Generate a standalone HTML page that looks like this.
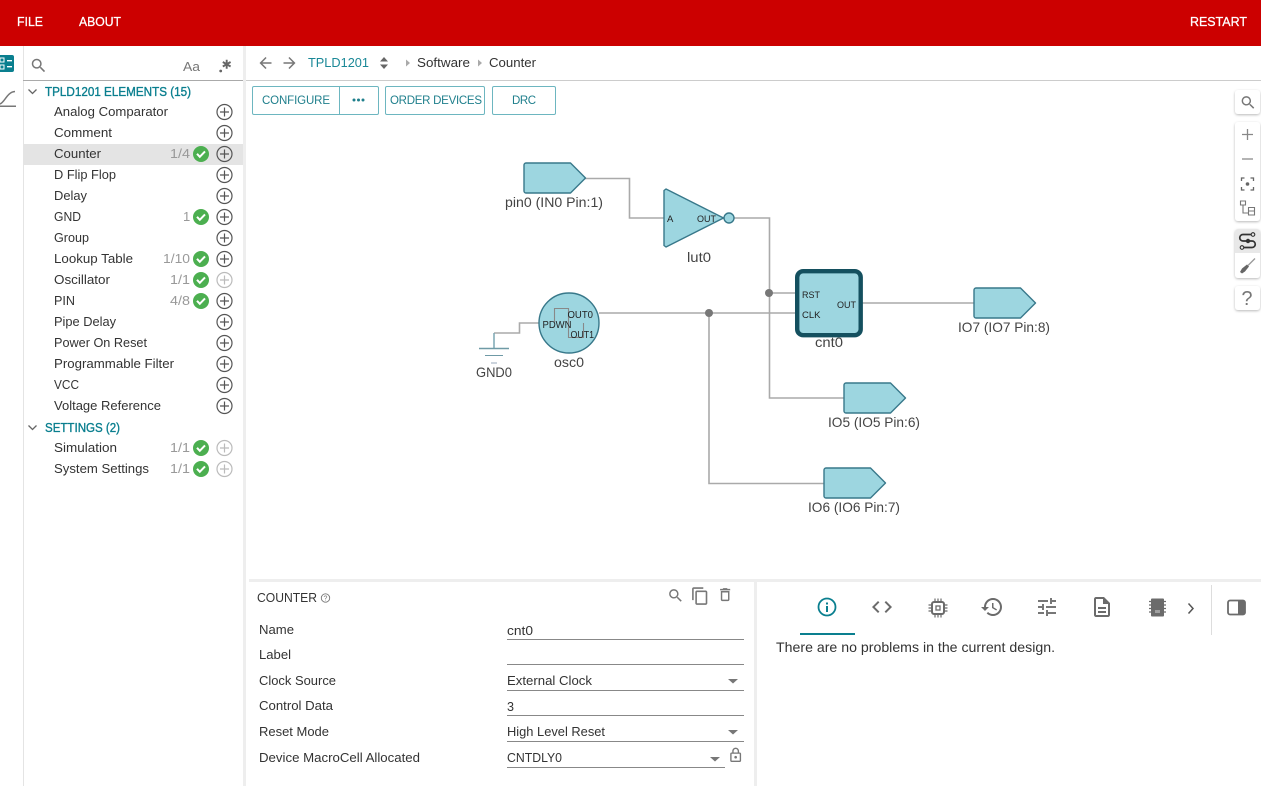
<!DOCTYPE html>
<html lang="en">
<head>
<meta charset="utf-8">
<title>TPLD1201</title>
<style>
html,body{margin:0;padding:0;width:1261px;height:786px;overflow:hidden;background:#fff}
svg{display:block}
text{font-family:"Liberation Sans",sans-serif;font-size:13px;fill:#333;white-space:pre}
.h{fill:#fff;font-size:12.5px;stroke:#fff;stroke-width:.25}
.t{fill:#0a7f8f;font-size:12.5px;stroke:#0a7f8f;stroke-width:.35}
.c{fill:#999;font-size:13px}
.b{fill:#1f7f8c;font-size:11.5px}
.l{font-size:14px;fill:#444}
.s{font-size:9.5px;fill:#222}
.w{fill:none;stroke:#aaa;stroke-width:1.6}
.p{fill:#9dd6e0;stroke:#38788a;stroke-width:1.4;stroke-linejoin:round}
.a{fill:none;stroke:#555;stroke-width:1.2}
.d{fill:none;stroke:#bbb;stroke-width:1.2}
.u{stroke:#888;stroke-width:1}
</style>
</head>
<body>
<svg width="1261" height="786" viewBox="0 0 1261 786" xmlns="http://www.w3.org/2000/svg">
<defs>
<filter id="sh" x="-30%" y="-30%" width="160%" height="160%"><feDropShadow dx="0" dy="1" stdDeviation="1.3" flood-color="#000" flood-opacity=".28"/></filter>
<g id="pl"><circle r="7.5" class="a"/><path d="M-4.5 0H4.5M0-4.5V4.5" class="a"/></g>
<g id="pd"><circle r="7.5" class="d"/><path d="M-4.5 0H4.5M0-4.5V4.5" class="d"/></g>
<g id="ck"><circle r="8" fill="#4caf50"/><path d="M-4-.2-1.2 2.8 4-2.6" fill="none" stroke="#fff" stroke-width="2"/></g>
</defs>

<!-- header -->
<rect width="1261" height="46" fill="#cc0000"/>
<text class="h" x="17" y="26" textLength="26" lengthAdjust="spacingAndGlyphs">FILE</text>
<text class="h" x="79" y="26" textLength="42" lengthAdjust="spacingAndGlyphs">ABOUT</text>
<text class="h" x="1190" y="26" textLength="57" lengthAdjust="spacingAndGlyphs">RESTART</text>

<!-- left strip -->
<rect x="23" y="46" width="1" height="740" fill="#e4e4e4"/>
<rect x="-4" y="55" width="18" height="17" rx="2" fill="#0a7f8f"/>
<path d="M0 58h4v4H0zM0 65h4v4H0z" fill="none" stroke="#fff" stroke-width="1"/>
<path d="M7 60h5v1.4H7zM7 66h5v1.4H7z" fill="#fff"/>
<path d="M0 104C5 102 7 92 15 91.500" fill="none" stroke="#777" stroke-width="1.500"/>
<rect x="0" y="105.500" width="16" height="1.500" fill="#777"/>

<!-- sidebar -->
<rect x="243" y="46" width="3" height="740" fill="#eee"/>
<rect x="23" y="80" width="220" height="1" fill="#aaa"/>
<g transform="translate(29.500 56.500) scale(.76)" fill="#777"><path d="M15.500 14h-.79l-.28-.27C15.410 12.590 16 11.110 16 9.500 16 5.910 13.090 3 9.500 3S3 5.910 3 9.500 5.910 16 9.500 16c1.610 0 3.090-.59 4.230-1.570l.27.28v.79l5 4.990L20.490 19l-4.990-5zm-6 0C7.010 14 5 11.990 5 9.500S7.010 5 9.500 5 14 7.010 14 9.500 11.990 14 9.500 14z"/></g>
<text x="183" y="71" style="font-size:13px;fill:#777" textLength="17" lengthAdjust="spacingAndGlyphs">Aa</text>
<circle cx="220.700" cy="71" r="1.400" fill="#666"/>
<path d="M226.700 59.800v9M222.800 62l7.800 4.500M230.600 62l-7.800 4.500" stroke="#666" stroke-width="1.900"/>

<path d="M28.500 89.500 32.500 93.500 36.500 89.500M28.500 425.500 32.500 429.500 36.500 425.500" fill="none" stroke="#666" stroke-width="1.300"/>
<text class="t" x="45" y="96" textLength="146" lengthAdjust="spacingAndGlyphs">TPLD1201 ELEMENTS (15)</text>
<text class="t" x="45" y="432" textLength="75" lengthAdjust="spacingAndGlyphs">SETTINGS (2)</text>

<rect x="23" y="144" width="220" height="21" fill="#e4e4e4"/>

<g>
<text x="54" y="116" textLength="114" lengthAdjust="spacingAndGlyphs">Analog Comparator</text>
<text x="54" y="137" textLength="58" lengthAdjust="spacingAndGlyphs">Comment</text>
<text x="54" y="158" textLength="47" lengthAdjust="spacingAndGlyphs">Counter</text>
<text x="54" y="179" textLength="62" lengthAdjust="spacingAndGlyphs">D Flip Flop</text>
<text x="54" y="200" textLength="33" lengthAdjust="spacingAndGlyphs">Delay</text>
<text x="54" y="221" textLength="27" lengthAdjust="spacingAndGlyphs">GND</text>
<text x="54" y="242" textLength="35" lengthAdjust="spacingAndGlyphs">Group</text>
<text x="54" y="263" textLength="79" lengthAdjust="spacingAndGlyphs">Lookup Table</text>
<text x="54" y="284" textLength="56" lengthAdjust="spacingAndGlyphs">Oscillator</text>
<text x="54" y="305" textLength="21" lengthAdjust="spacingAndGlyphs">PIN</text>
<text x="54" y="326" textLength="62" lengthAdjust="spacingAndGlyphs">Pipe Delay</text>
<text x="54" y="347" textLength="93" lengthAdjust="spacingAndGlyphs">Power On Reset</text>
<text x="54" y="368" textLength="120" lengthAdjust="spacingAndGlyphs">Programmable Filter</text>
<text x="54" y="389" textLength="25" lengthAdjust="spacingAndGlyphs">VCC</text>
<text x="54" y="410" textLength="107" lengthAdjust="spacingAndGlyphs">Voltage Reference</text>
<text x="54" y="452" textLength="63" lengthAdjust="spacingAndGlyphs">Simulation</text>
<text x="54" y="473" textLength="95" lengthAdjust="spacingAndGlyphs">System Settings</text>

<text class="c" x="170" y="158" textLength="20" lengthAdjust="spacingAndGlyphs">1/4</text>
<text class="c" x="183" y="221">1</text>
<text class="c" x="163" y="263" textLength="27" lengthAdjust="spacingAndGlyphs">1/10</text>
<text class="c" x="170" y="284" textLength="20" lengthAdjust="spacingAndGlyphs">1/1</text>
<text class="c" x="170" y="305" textLength="20" lengthAdjust="spacingAndGlyphs">4/8</text>
<text class="c" x="170" y="452" textLength="20" lengthAdjust="spacingAndGlyphs">1/1</text>
<text class="c" x="170" y="473" textLength="20" lengthAdjust="spacingAndGlyphs">1/1</text>
</g>

<use href="#ck" x="201" y="154"/>
<use href="#ck" x="201" y="217"/>
<use href="#ck" x="201" y="259"/>
<use href="#ck" x="201" y="280"/>
<use href="#ck" x="201" y="301"/>
<use href="#ck" x="201" y="448"/>
<use href="#ck" x="201" y="469"/>

<use href="#pl" x="224.500" y="112"/>
<use href="#pl" x="224.500" y="133"/>
<use href="#pl" x="224.500" y="154"/>
<use href="#pl" x="224.500" y="175"/>
<use href="#pl" x="224.500" y="196"/>
<use href="#pl" x="224.500" y="217"/>
<use href="#pl" x="224.500" y="238"/>
<use href="#pl" x="224.500" y="259"/>
<use href="#pd" x="224.500" y="280"/>
<use href="#pl" x="224.500" y="301"/>
<use href="#pl" x="224.500" y="322"/>
<use href="#pl" x="224.500" y="343"/>
<use href="#pl" x="224.500" y="364"/>
<use href="#pl" x="224.500" y="385"/>
<use href="#pl" x="224.500" y="406"/>
<use href="#pd" x="224.500" y="448"/>
<use href="#pd" x="224.500" y="469"/>

<!-- breadcrumb -->
<rect x="246" y="80" width="1015" height="1" fill="#ccc"/>
<g transform="translate(256.500 54) scale(.75)" fill="#777"><path d="M20 11H7.830l5.590-5.590L12 4l-8 8 8 8 1.410-1.410L7.830 13H20v-2z"/></g>
<g transform="translate(280.500 54) scale(.75)" fill="#777"><path d="M12 4l-1.410 1.410L16.170 11H4v2h12.170l-5.580 5.590L12 20l8-8z"/></g>
<text x="308" y="67" style="fill:#1a8897" textLength="61" lengthAdjust="spacingAndGlyphs">TPLD1201</text>
<path d="M380 61.500 384 57 388 61.500zM380 64.500 384 69 388 64.500z" fill="#666"/>
<path d="M406 59.500 410 63 406 66.500zM478 59.500 482 63 478 66.500z" fill="#aaa"/>
<text x="417" y="67" textLength="53" lengthAdjust="spacingAndGlyphs">Software</text>
<text x="489" y="67" textLength="47" lengthAdjust="spacingAndGlyphs">Counter</text>

<!-- buttons -->
<g fill="#fff" stroke="#6db6c0" stroke-width="1">
<rect x="252.500" y="86.500" width="126" height="28" rx="1.500"/>
<path d="M339.500 87v27"/>
<rect x="385.500" y="86.500" width="99" height="28" rx="1.500"/>
<rect x="492.500" y="86.500" width="63" height="28" rx="1.500"/>
</g>
<text class="b" x="262" y="104" textLength="68">CONFIGURE</text>
<circle cx="354" cy="100" r="1.500" fill="#1f7f8c"/><circle cx="358.500" cy="100" r="1.500" fill="#1f7f8c"/><circle cx="363" cy="100" r="1.500" fill="#1f7f8c"/>
<text class="b" x="390" y="104" textLength="92">ORDER DEVICES</text>
<text class="b" x="512" y="104" textLength="24">DRC</text>

<!-- right toolbar -->
<g fill="#fff" filter="url(#sh)">
<rect x="1235" y="90" width="25" height="24" rx="3"/>
<rect x="1235" y="122" width="25" height="99" rx="3"/>
<rect x="1235" y="229" width="25" height="49" rx="3"/>
<rect x="1235" y="286" width="25" height="24" rx="3"/>
</g>
<path d="M1235 232a3 3 0 0 1 3-3h19a3 3 0 0 1 3 3v21h-25z" fill="#e8e8e8"/>
<g transform="translate(1239.500 94) scale(.72)" fill="#777"><path d="M15.500 14h-.79l-.28-.27C15.410 12.590 16 11.110 16 9.500 16 5.910 13.090 3 9.500 3S3 5.910 3 9.500 5.910 16 9.500 16c1.610 0 3.090-.59 4.230-1.570l.27.28v.79l5 4.990L20.490 19l-4.990-5zm-6 0C7.010 14 5 11.990 5 9.500S7.010 5 9.500 5 14 7.010 14 9.500 11.990 14 9.500 14z"/></g>
<path d="M1242 134.500h11M1247.500 129v11M1242 159h11" stroke="#888" stroke-width="1.300" fill="none"/>
<path d="M1241.500 181v-3h3M1250.500 178h3v3M1253.500 187v3h-3M1244.500 190h-3v-3" stroke="#666" stroke-width="1.300" fill="none"/>
<circle cx="1247.500" cy="184" r="1.800" fill="#666"/>
<path d="M1240.500 201h5v4h-5zM1248.500 207.500h6v3.500h-6zM1248.500 211h6v4h-6zM1243 205v8h5.500" fill="none" stroke="#777" stroke-width="1.100"/>
<path d="M1252 234.500h-9a3.200 3.200 0 0 0 0 6.500h9a3.200 3.200 0 0 1 0 6.500h-9" fill="none" stroke="#333" stroke-width="1.700"/>
<circle cx="1253" cy="234.500" r="1.800" fill="#e8e8e8" stroke="#333" stroke-width="1.100"/>
<circle cx="1242" cy="247.500" r="1.800" fill="#e8e8e8" stroke="#333" stroke-width="1.100"/>
<circle cx="1248" cy="241" r="2.200" fill="#333"/>
<path d="M1240 272l2-3.500 5-4 2 2-4 5-3 2z" fill="#666"/>
<path d="M1248 265.500 1255 258.500" stroke="#999" stroke-width="1.300"/>
<text x="1241.500" y="305" style="font-size:20px;fill:#777" textLength="11" lengthAdjust="spacingAndGlyphs">?</text>

<!-- diagram wires -->
<g class="w">
<path d="M585 178.500H629.500V218H664"/>
<path d="M734 218H769.500V398H844"/>
<path d="M769 293H797"/>
<path d="M599 313H797"/>
<path d="M709 313V483.500H824"/>
<path d="M862 303H974"/>
<path d="M539 323H519.500V333H494"/>
</g>
<circle cx="769" cy="293" r="4" fill="#777"/>
<circle cx="709" cy="313" r="4" fill="#777"/>

<!-- pins -->
<path class="p" d="M524 165a2 2 0 0 1 2-2H570.500L585.500 178 570.500 193H526a2 2 0 0 1-2-2z"/>
<path class="p" d="M974 290a2 2 0 0 1 2-2H1020.500L1035.500 303 1020.500 318H976a2 2 0 0 1-2-2z"/>
<path class="p" d="M844 385a2 2 0 0 1 2-2H890.500L905.500 398 890.500 413H846a2 2 0 0 1-2-2z"/>
<path class="p" d="M824 470a2 2 0 0 1 2-2H870.500L885.500 483 870.500 498H826a2 2 0 0 1-2-2z"/>

<!-- lut -->
<path class="p" d="M664 190.500 666 189 723.500 218 666 247 664 245.500z"/>
<circle class="p" cx="729" cy="218" r="5"/>
<text class="s" x="667" y="222">A</text>
<text class="s" x="697" y="222" textLength="19" lengthAdjust="spacingAndGlyphs">OUT</text>

<!-- cnt -->
<rect x="797.200" y="271.200" width="63.500" height="64" rx="6" fill="#9dd6e0" stroke="#14505f" stroke-width="4.400"/>
<text class="s" x="802" y="298" textLength="18" lengthAdjust="spacingAndGlyphs">RST</text>
<text class="s" x="802" y="318" textLength="18.500" lengthAdjust="spacingAndGlyphs">CLK</text>
<text class="s" x="837" y="308" textLength="19" lengthAdjust="spacingAndGlyphs">OUT</text>

<!-- osc -->
<circle class="p" cx="569" cy="323" r="30"/>
<path d="M554.500 322V308.500H568.500V337.500H583.500V323" fill="none" stroke="#888" stroke-width="1.100"/>
<text class="s" x="542.500" y="328" style="font-size:10px" textLength="29" lengthAdjust="spacingAndGlyphs">PDWN</text>
<text class="s" x="567.500" y="318" style="font-size:10px" textLength="25.500" lengthAdjust="spacingAndGlyphs">OUT0</text>
<text class="s" x="570.500" y="338" style="font-size:10px" textLength="23.500" lengthAdjust="spacingAndGlyphs">OUT1</text>

<!-- gnd -->
<path d="M494 333V348" stroke="#7ba7b2" stroke-width="1.500"/>
<path d="M479 348.500H509" stroke="#6f9aa6" stroke-width="1.500"/>
<path d="M485 355.500H503" stroke="#6f9aa6" stroke-width="1"/>
<path d="M491 363H497" stroke="#9ab" stroke-width="1"/>

<text class="l" x="505" y="207" textLength="98" lengthAdjust="spacingAndGlyphs">pin0 (IN0 Pin:1)</text>
<text class="l" x="687" y="262" textLength="24" lengthAdjust="spacingAndGlyphs">lut0</text>
<text class="l" x="815" y="347" textLength="28" lengthAdjust="spacingAndGlyphs">cnt0</text>
<text class="l" x="958" y="332" textLength="92" lengthAdjust="spacingAndGlyphs">IO7 (IO7 Pin:8)</text>
<text class="l" x="828" y="427" textLength="92" lengthAdjust="spacingAndGlyphs">IO5 (IO5 Pin:6)</text>
<text class="l" x="808" y="512" textLength="92" lengthAdjust="spacingAndGlyphs">IO6 (IO6 Pin:7)</text>
<text class="l" x="554" y="367" textLength="30" lengthAdjust="spacingAndGlyphs">osc0</text>
<text class="l" x="476" y="377" textLength="36" lengthAdjust="spacingAndGlyphs">GND0</text>

<!-- bottom panels -->
<rect x="249" y="579" width="1012" height="3" fill="#eee"/>
<rect x="754" y="582" width="3" height="204" fill="#eee"/>

<text x="257" y="602" textLength="60" lengthAdjust="spacingAndGlyphs">COUNTER</text>
<circle cx="325.500" cy="598" r="4.200" fill="none" stroke="#777" stroke-width=".9"/>
<text x="323.500" y="600.500" style="font-size:7px;fill:#777">?</text>
<g transform="translate(667 587) scale(.72)" fill="#777"><path d="M15.500 14h-.79l-.28-.27C15.410 12.590 16 11.110 16 9.500 16 5.910 13.090 3 9.500 3S3 5.910 3 9.500 5.910 16 9.500 16c1.610 0 3.090-.59 4.230-1.570l.27.28v.79l5 4.990L20.490 19l-4.990-5zm-6 0C7.010 14 5 11.990 5 9.500S7.010 5 9.500 5 14 7.010 14 9.500 11.990 14 9.500 14z"/></g>
<g transform="translate(690.500 586.500) scale(.8)" fill="#777"><path d="M16 1H4c-1.100 0-2 .9-2 2v14h2V3h12V1zm3 4H8c-1.100 0-2 .9-2 2v14c0 1.100.9 2 2 2h11c1.100 0 2-.9 2-2V7c0-1.100-.9-2-2-2zm0 16H8V7h11v14z"/></g>
<g transform="translate(716.500 586) scale(.72)" fill="#777"><path d="M6 19c0 1.100.9 2 2 2h8c1.100 0 2-.9 2-2V7H6v12zM8 9h8v10H8V9zm7.500-5l-1-1h-5l-1 1H5v2h14V4z"/></g>

<text x="259" y="634" textLength="35" lengthAdjust="spacingAndGlyphs">Name</text>
<text x="259" y="659" textLength="32" lengthAdjust="spacingAndGlyphs">Label</text>
<text x="259" y="685" textLength="77" lengthAdjust="spacingAndGlyphs">Clock Source</text>
<text x="259" y="710" textLength="74" lengthAdjust="spacingAndGlyphs">Control Data</text>
<text x="259" y="736" textLength="70" lengthAdjust="spacingAndGlyphs">Reset Mode</text>
<text x="259" y="762" textLength="161" lengthAdjust="spacingAndGlyphs">Device MacroCell Allocated</text>

<text x="507" y="635" textLength="26" lengthAdjust="spacingAndGlyphs">cnt0</text>
<text x="507" y="685" textLength="85" lengthAdjust="spacingAndGlyphs">External Clock</text>
<text x="507" y="711" textLength="7" lengthAdjust="spacingAndGlyphs">3</text>
<text x="507" y="736" textLength="98" lengthAdjust="spacingAndGlyphs">High Level Reset</text>
<text x="507" y="762" textLength="55" lengthAdjust="spacingAndGlyphs">CNTDLY0</text>

<path class="u" d="M507 639.500H744M507 664.500H744M507 690.500H744M507 715.500H744M507 741.500H744M507 767.500H725"/>
<path d="M728 679H738L733 683.500zM728 730H738L733 734.500zM710 757H720L715 761.500z" fill="#777"/>
<g transform="translate(727.500 747) scale(.68)" fill="#777"><path d="M18 8h-1V6c0-2.760-2.240-5-5-5S7 3.240 7 6v2H6c-1.100 0-2 .9-2 2v10c0 1.100.9 2 2 2h12c1.100 0 2-.9 2-2V10c0-1.100-.9-2-2-2zM9 6c0-1.660 1.340-3 3-3s3 1.340 3 3v2H9V6zm9 14H6V10h12v10zm-6-3c1.100 0 2-.9 2-2s-.9-2-2-2-2 .9-2 2 .9 2 2 2z"/></g>

<!-- tabs -->
<rect x="800" y="633" width="55" height="2" fill="#0a7f8f"/>
<circle cx="827" cy="607" r="8.500" fill="none" stroke="#0a7f8f" stroke-width="1.800"/>
<path d="M826 606h2v6h-2zM826 602.500h2v2h-2z" fill="#0a7f8f"/>
<g transform="translate(870 595)" fill="#6b6b6b"><path d="M9.400 16.600L4.800 12l4.600-4.600L8 6l-6 6 6 6 1.400-1.400zm5.200 0l4.600-4.600-4.600-4.600L16 6l6 6-6 6-1.400-1.400z"/></g>
<rect x="932" y="602" width="12" height="12" rx="2" fill="none" stroke="#6b6b6b" stroke-width="2"/>
<rect x="936" y="606" width="4" height="4" fill="none" stroke="#6b6b6b" stroke-width="1.300"/>
<path d="M935 598.500v3M938 598.500v3M941 598.500v3M935 614.500v3M938 614.500v3M941 614.500v3M928.500 605h3M928.500 608h3M928.500 611h3M944.500 605h3M944.500 608h3M944.500 611h3" stroke="#6b6b6b" stroke-width="1.200" fill="none"/>
<g transform="translate(980 595)" fill="#6b6b6b"><path d="M13 3c-4.970 0-9 4.030-9 9H1l3.890 3.890.07.14L9 12H6c0-3.870 3.130-7 7-7s7 3.130 7 7-3.130 7-7 7c-1.930 0-3.680-.79-4.940-2.060l-1.420 1.420C8.270 19.990 10.510 21 13 21c4.970 0 9-4.030 9-9s-4.030-9-9-9zm-1 5v5l4.280 2.540.72-1.210-3.500-2.080V8H12z"/></g>
<g transform="translate(1035 595)" fill="#777"><path d="M3 17v2h6v-2H3zM3 5v2h10V5H3zm10 16v-2h8v-2h-8v-2h-2v6h2zM7 9v2H3v2h4v2h2V9H7zm14 4v-2H11v2h10zm-6-4h2V7h4V5h-4V3h-2v6z"/></g>
<g transform="translate(1090 595)" fill="#6b6b6b"><path d="M8 16h8v2H8zm0-4h8v2H8zm6-10H6c-1.100 0-2 .9-2 2v16c0 1.100.89 2 1.990 2H18c1.100 0 2-.9 2-2V8l-6-6zm4 18H6V4h7v5h5v11z"/></g>
<rect x="1151" y="598.500" width="13" height="18" rx="1" fill="#6b6b6b"/>
<path d="M1149 601.500h17M1149 605h17M1149 608.500h17M1149 612h17" stroke="#6b6b6b" stroke-width="1.300"/>
<rect x="1155" y="610" width="5" height="3" fill="#a0a0a0"/>
<path d="M1188.500 603.500 1193 608.500 1188.500 613.500" fill="none" stroke="#555" stroke-width="1.500"/>
<rect x="1211" y="585" width="1" height="50" fill="#ddd"/>
<rect x="1228" y="600.500" width="17" height="14" rx="2" fill="none" stroke="#6b6b6b" stroke-width="1.800"/>
<rect x="1238" y="600.500" width="7" height="14" fill="#6b6b6b"/>

<text x="776" y="652" style="font-size:14px" textLength="279" lengthAdjust="spacingAndGlyphs">There are no problems in the current design.</text>
</svg>
</body>
</html>
